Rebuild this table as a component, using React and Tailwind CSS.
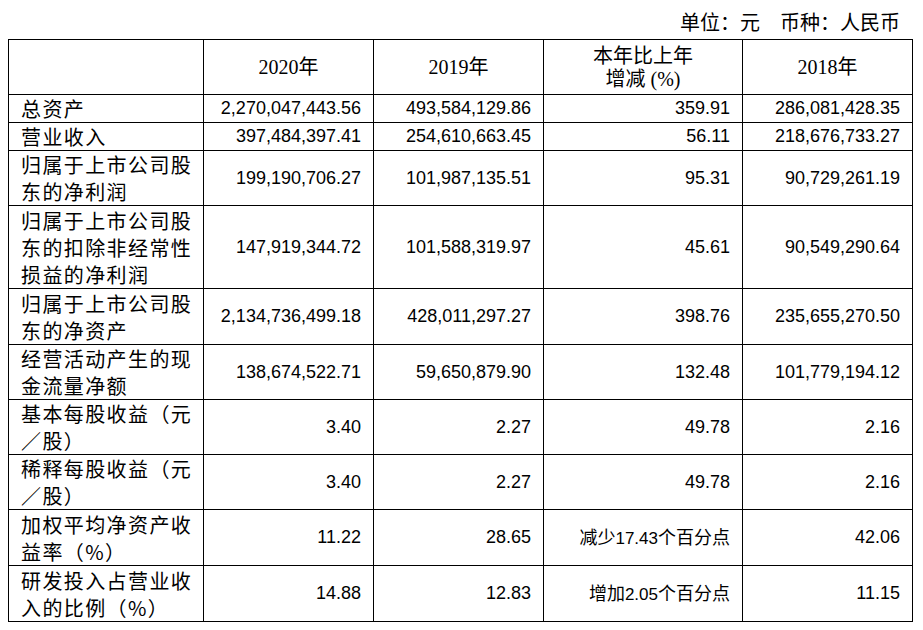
const rows = [
  { label: ['总资产'], h: 'h-[28px]', v: ['2,270,047,443.56', '493,584,129.86', '359.91', '286,081,428.35'] },
  { label: ['营业收入'], h: 'h-[28px]', v: ['397,484,397.41', '254,610,663.45', '56.11', '218,676,733.27'] },
  { label: ['归属于上市公司股', '东的净利润'], h: 'h-[55px]', v: ['199,190,706.27', '101,987,135.51', '95.31', '90,729,261.19'] },
  { label: ['归属于上市公司股', '东的扣除非经常性', '损益的净利润'], h: 'h-[83px]', v: ['147,919,344.72', '101,588,319.97', '45.61', '90,549,290.64'] },
  { label: ['归属于上市公司股', '东的净资产'], h: 'h-[56px]', v: ['2,134,736,499.18', '428,011,297.27', '398.76', '235,655,270.50'] },
  { label: ['经营活动产生的现', '金流量净额'], h: 'h-[55px]', v: ['138,674,522.71', '59,650,879.90', '132.48', '101,779,194.12'] },
  { label: ['基本每股收益（元', '／股）'], h: 'h-[55px]', v: ['3.40', '2.27', '49.78', '2.16'] },
  { label: ['稀释每股收益（元', '／股）'], h: 'h-[55px]', v: ['3.40', '2.27', '49.78', '2.16'] },
  { label: ['加权平均净资产收', '益率（%）'], h: 'h-[56px]', v: ['11.22', '28.65', ['减少', '17.43', '个百分点'], '42.06'] },
  { label: ['研发投入占营业收', '入的比例（%）'], h: 'h-[56px]', v: ['14.88', '12.83', ['增加', '2.05', '个百分点'], '11.15'] },
];

const cjk = "font-['Noto_Sans_CJK_SC',sans-serif]";
const num = "font-['Liberation_Sans','Noto_Sans_CJK_SC',sans-serif]";
const serif = "font-['Liberation_Serif','Noto_Sans_CJK_SC',serif]";

function Cell({ value }) {
  if (Array.isArray(value)) {
    return (
      <td className={`border border-black pr-3 text-right align-middle text-[17px] ${num}`}>
        <span className={`text-[18px] ${cjk}`}>{value[0]}</span>
        <span>{value[1]}</span>
        <span className={`text-[18px] ${cjk}`}>{value[2]}</span>
      </td>
    );
  }
  return (
    <td className={`border border-black pr-3 text-right align-middle text-[18px] ${num}`}>
      {value}
    </td>
  );
}

export default function App() {
  return (
    <div className="w-[923px] h-[630px] bg-white text-black pl-[8px] overflow-hidden">
      {/* unit line */}
      <div className={`w-[904px] h-[39px] pt-[8px] pr-3 text-right text-[20px] leading-[28px] ${cjk}`}>
        单位：元　币种：人民币
      </div>

      <table className="table-fixed border-collapse w-[904px]">
        <colgroup>
          <col className="w-[195px]" />
          <col className="w-[170px]" />
          <col className="w-[170px]" />
          <col className="w-[199px]" />
          <col className="w-[170px]" />
        </colgroup>
        <thead>
          <tr className="h-[55px]">
            <th className="border border-black"></th>
            <th className={`border border-black font-normal text-[20px] ${serif}`}>2020年</th>
            <th className={`border border-black font-normal text-[20px] ${serif}`}>2019年</th>
            <th className={`border border-black font-normal text-[20px] leading-[25px] ${serif}`}>
              <div className={cjk}>本年比上年</div>
              <div>增减 (%)</div>
            </th>
            <th className={`border border-black font-normal text-[20px] ${serif}`}>2018年</th>
          </tr>
        </thead>
        <tbody>
          {rows.map((r, i) => (
            <tr key={i} className={r.h}>
              <td className={`border border-black pl-3 align-middle text-[20px] leading-[27px] tracking-[1.4px] ${cjk}`}>
                {r.label.map((l, j) => (
                  <div key={j} className="whitespace-nowrap">{l}</div>
                ))}
              </td>
              {r.v.map((v, j) => (
                <Cell key={j} value={v} />
              ))}
            </tr>
          ))}
        </tbody>
      </table>
    </div>
  );
}
